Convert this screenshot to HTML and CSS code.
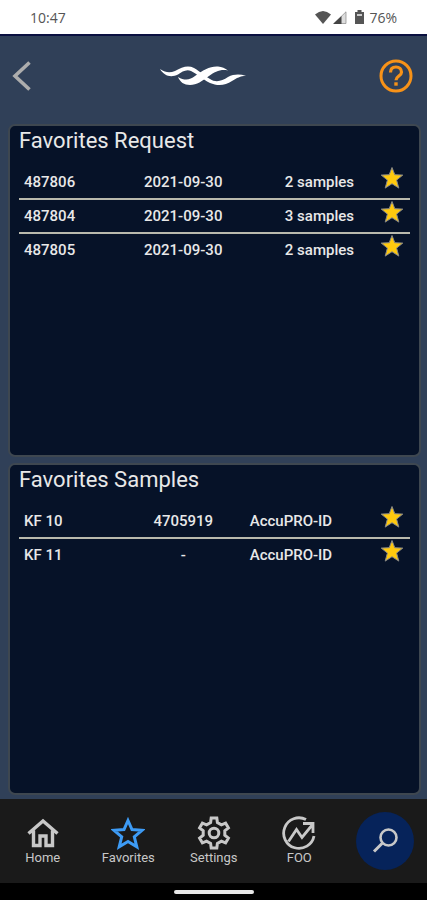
FILE: index.html
```html
<!DOCTYPE html>
<html lang="en">
<head>
    <meta charset="UTF-8">
    <meta name="viewport" content="width=device-width, initial-scale=1.0">
    <title>Favorites</title>
    <link rel="stylesheet" href="styles.css">
</head>
<body>
    <svg class="defs" aria-hidden="true">
        <symbol id="star" viewBox="0 0 24 24">
            <path d="M12 1.5l2.8 7.2 8 .4-6.2 5 2.200 8L12 17.700l-6.800 4.400 2.200-8-6.200-5 8-.4z"/>
        </symbol>
    </svg>

    <div class="status-bar">
        <span>10:47</span>
        <div class="status-icons">
            <svg width="16" height="13" viewBox="0 0 16 13"><path d="M0 3.500Q8-3.500 16 3.500L8 13z" fill="#555"/></svg>
            <svg width="14" height="13" viewBox="0 0 14 13"><path d="M1 12.500L13 .8V12.500z" fill="#ddd" stroke="#888" stroke-width=".7"/><path d="M0 13L8.500 5V13z" fill="#444"/></svg>
            <svg class="battery" width="9" height="14" viewBox="0 0 9 14"><path d="M2.500 0h4v2H9v12H0V2h2.500z" fill="#555"/><path d="M2 4h5v2H2z" fill="#ccc"/></svg>
            <span>76%</span>
        </div>
    </div>

    <header>
        <button type="button" class="icon-button" aria-label="Back">
            <svg width="20" height="32" viewBox="0 0 20 32"><path d="M17.500 2.500L3 16l14.500 13.500" fill="none" stroke="#adadad" stroke-width="3.600"/></svg>
        </button>
        <svg class="logo" width="86" height="22" viewBox="0 0 86 22" fill="#fff">
            <path d="M0 4C6 8 10 8 15 6C22 2 28 0 34 3C41 7 46 12 50 14C56 18 62 16 68 12C74 9 80 9 86 11C80 11 77 13 72 16C65 21 57 21 50 18C42 14 37 9 31 6C26 4 22 7 18 9.500C11 13 4 11 0 4z"/>
            <path d="M18 12C25 16 30 15 35 11C43 5 50 1 58 1.500C62 2 65 3 68 5.500C60 4 55 7 49 11C42 16 37 20 30 20C24 20 20 17 18 12z"/>
        </svg>
        <button type="button" class="icon-button" aria-label="Help">
            <svg width="34" height="34" viewBox="0 0 34 34" fill="none" stroke="#f79218">
                <circle cx="17" cy="17" r="15" stroke-width="3"/>
                <path d="M11.500 13.500c0-3.500 2.200-5.500 5.500-5.500s5.500 2.200 5.500 5.200c0 3.800-5.500 4-5.500 8" stroke-width="3.200"/>
                <path d="M17 23.300v3.400" stroke-width="3.400"/>
            </svg>
        </button>
    </header>

    <main>
        <section class="panel">
            <h2>Favorites Request</h2>
            <table class="requests">
                <tbody>
                    <tr>
                        <td>487806</td>
                        <td>2021-09-30</td>
                        <td>2 samples</td>
                        <td><button type="button" class="star" aria-label="Remove 487806"><svg><use href="#star"/></svg></button></td>
                    </tr>
                    <tr>
                        <td>487804</td>
                        <td>2021-09-30</td>
                        <td>3 samples</td>
                        <td><button type="button" class="star" aria-label="Remove 487804"><svg><use href="#star"/></svg></button></td>
                    </tr>
                    <tr>
                        <td>487805</td>
                        <td>2021-09-30</td>
                        <td>2 samples</td>
                        <td><button type="button" class="star" aria-label="Remove 487805"><svg><use href="#star"/></svg></button></td>
                    </tr>
                </tbody>
            </table>
        </section>
        <section class="panel">
            <h2>Favorites Samples</h2>
            <table class="samples">
                <tbody>
                    <tr>
                        <td>KF 10</td>
                        <td>4705919</td>
                        <td>AccuPRO-ID</td>
                        <td><button type="button" class="star" aria-label="Remove KF 10"><svg><use href="#star"/></svg></button></td>
                    </tr>
                    <tr>
                        <td>KF 11</td>
                        <td>-</td>
                        <td>AccuPRO-ID</td>
                        <td><button type="button" class="star" aria-label="Remove KF 11"><svg><use href="#star"/></svg></button></td>
                    </tr>
                </tbody>
            </table>
        </section>
    </main>

    <nav>
        <a href="#home">
            <svg viewBox="0 0 34 34"><path d="M2.500 17.500L17 5l14.500 12.500M7.500 14.500V29.500h6.500v-9.500h6v9.500h6.500V14.500" stroke-width="3.400"/></svg>
            Home
        </a>
        <a href="#favorites" class="active">
            <svg viewBox="0 0 34 34"><path d="M17 4.500l4 9 10 .8-7.700 6.500 2.500 10-8.800-5.300-8.800 5.300 2.500-10L3 14.300l10-.8z" stroke-width="3"/></svg>
            Favorites
        </a>
        <a href="#settings">
            <svg viewBox="0 0 34 34"><path d="M14.200 2h5.600l.6 4.500L24.400 8.800 28.600 7.100 31.400 11.900 27.800 14.700V19.300L31.400 22.100 28.600 26.900 24.400 25.200 20.400 27.500 19.800 32H14.200L13.600 27.500 9.600 25.200 5.400 26.900 2.600 22.100 6.200 19.300V14.700L2.600 11.900 5.400 7.100 9.600 8.800 13.600 6.500z" stroke-width="3"/><circle cx="17" cy="17" r="4.800" stroke-width="3"/></svg>
            Settings
        </a>
        <a href="#foo">
            <svg viewBox="0 0 34 34" stroke-width="2.800"><path d="M24 3.500A15.300 15.300 0 1 0 32 20M6.500 25.500l8-12 5.500 8L31 8M21 7.500h10v9.500"/></svg>
            FOO
        </a>
        <button type="button" class="search" aria-label="Search">
            <svg viewBox="2 -1 26 26"><circle cx="18.500" cy="8.500" r="8" stroke-width="2.600"/><path d="M12.500 14L4 22.500" stroke-width="3"/></svg>
        </button>
    </nav>
    <div class="gesture-bar"><span></span></div>
</body>
</html>
```
FILE: styles.css
```css
* {
    box-sizing: border-box;
}
body {
    margin: 0;
    min-height: 100vh;
    display: flex;
    flex-direction: column;
    background-color: #304058;
    color: #e8e8e8;
    font-family: Roboto, sans-serif;
}
button {
    padding: 0;
    border: 0;
    background: none;
    cursor: pointer;
}
svg {
    display: block;
}
.defs {
    position: absolute;
    width: 0;
    height: 0;
}
.status-bar {
    display: flex;
    justify-content: space-between;
    align-items: center;
    height: 36px;
    padding: 0 30px;
    background: white;
    border-bottom: 2px solid #0a1040;
    color: #555;
    font-family: "Open Sans", sans-serif;
    font-size: 14px;
}
.status-icons {
    display: flex;
    align-items: center;
    gap: 2px;
}
.battery {
    margin: 0 3px 0 6px;
}
header {
    display: grid;
    grid-template-columns: 1fr auto 1fr;
    align-items: center;
    height: 80px;
    padding: 0 14px 0 12px;
}
.icon-button:first-child {
    justify-self: start;
}
.icon-button:last-child {
    justify-self: end;
}
.logo {
    margin-right: 20px;
}
main {
    flex: 1;
    display: grid;
    grid-auto-rows: 1fr;
    gap: 6px;
    padding: 8px 6px 4px 8px;
}
.panel {
    padding: 0 9px;
    background: #061228;
    border: 2px solid #3e4750;
    border-radius: 7px;
}
.panel h2 {
    margin: 0 0 8px;
    font-size: 22px;
    font-weight: 400;
    line-height: 30px;
}
table {
    width: 100%;
    table-layout: fixed;
    border-spacing: 0;
    font-size: 15px;
    font-weight: 500;
}
td {
    height: 34px;
    padding: 0;
    border-top: 2px solid transparent;
}
tr + tr td {
    border-top-color: #b9b9ad;
}
td:nth-child(1) {
    width: 25%;
    padding-left: 5px;
}
td:nth-child(2) {
    width: 34%;
    text-align: center;
}
td:nth-child(4) {
    width: 36px;
    vertical-align: top;
}
.requests td:nth-child(3) {
    padding-right: 20px;
    text-align: right;
}
.star {
    display: block;
    margin: 0 auto;
}
.star svg {
    width: 24px;
    height: 24px;
    fill: #ffc90e;
    stroke: #888;
    stroke-width: 1px;
}
nav {
    display: flex;
    align-items: center;
    height: 84px;
    background: #1a1a1a;
}
nav a {
    flex: 1;
    display: flex;
    flex-direction: column;
    align-items: center;
    color: #c8c8c8;
    font-size: 13px;
    line-height: 16px;
    text-decoration: none;
}
nav svg {
    width: 34px;
    height: 34px;
    fill: none;
    stroke: #c8c8c8;
}
nav .active svg {
    stroke: #3d9bf5;
}
.search {
    flex: none;
    width: 58px;
    height: 58px;
    margin: 0 13px 0 14px;
    background: #06235a;
    border-radius: 50%;
}
.search svg {
    width: 26px;
    height: 26px;
    margin: 0 auto;
}
.gesture-bar {
    display: flex;
    align-items: center;
    justify-content: center;
    height: 17px;
    background: black;
}
.gesture-bar span {
    width: 80px;
    height: 4px;
    background: #e8e8e8;
    border-radius: 2px;
}
```
